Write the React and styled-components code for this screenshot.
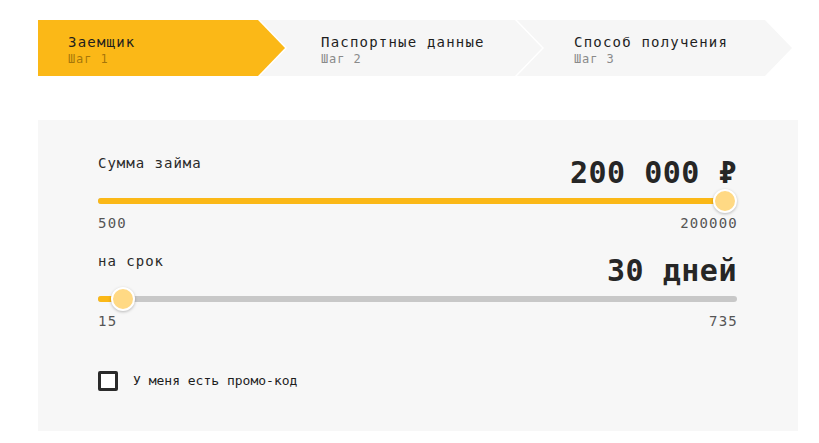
import React from "react";
import styled, { createGlobalStyle } from "styled-components";

const Global = createGlobalStyle`
  html, body { margin: 0; padding: 0; background: #fff; }
  body { font-family: "DejaVu Sans Mono", "Liberation Mono", monospace; color: #222; }
  * { box-sizing: border-box; }
`;

const Page = styled.div`
  width: 819px;
  padding: 20px 21px 0 38px;
`;

const Stepper = styled.div`
  display: flex;
  height: 56px;
`;

const ARROW = 27;

const Step = styled.div`
  flex: 0 0 ${(p) => p.$w}px;
  margin-left: ${(p) => (p.$first ? 0 : -25)}px;
  padding-left: ${(p) => p.$pl}px;
  padding-top: 3px;
  background: ${(p) => (p.$active ? "#FBB817" : "#f6f6f6")};
  display: flex;
  flex-direction: column;
  justify-content: center;
  gap: 1px;
  clip-path: ${(p) =>
    p.$first
      ? `polygon(0 0, calc(100% - ${ARROW}px) 0, 100% 50%, calc(100% - ${ARROW}px) 100%, 0 100%)`
      : `polygon(0 0, calc(100% - ${ARROW}px) 0, 100% 50%, calc(100% - ${ARROW}px) 100%, 0 100%, ${ARROW}px 50%)`};
`;

const StepTitle = styled.div`
  font-size: 14px;
  letter-spacing: 1.2px;
  line-height: 18px;
  color: #1e1e1e;
`;

const StepSub = styled.div`
  font-size: 12px;
  letter-spacing: 0.9px;
  line-height: 15px;
  color: ${(p) => (p.$active ? "rgba(90,60,0,0.55)" : "#8a8a8a")};
`;

const Panel = styled.div`
  margin-top: 44px;
  width: 760px;
  background: #f7f7f7;
  padding: 33px 61px 40px 60px;
  display: flex;
  flex-direction: column;
`;

const Block = styled.div`
  display: flex;
  flex-direction: column;
  margin-bottom: ${(p) => p.$mb}px;
`;

const HeadRow = styled.div`
  display: flex;
  justify-content: space-between;
  align-items: flex-start;
`;

const Label = styled.div`
  font-size: 14px;
  letter-spacing: 1px;
  line-height: 20px;
  color: #2a2a2a;
`;

const Value = styled.div`
  font-size: 30px;
  font-weight: bold;
  letter-spacing: 0.5px;
  line-height: 34px;
  margin-top: 3px;
  color: #262626;
`;

const Slider = styled.div`
  position: relative;
  height: 24px;
  margin-top: -1px;
`;

const Track = styled.div`
  position: absolute;
  left: 0;
  right: 0;
  top: 9px;
  height: 6px;
  border-radius: 3px;
  background: #c8c8c8;
`;

const Fill = styled.div`
  position: absolute;
  left: 0;
  top: 9px;
  height: 6px;
  border-radius: 3px;
  background: #FBB817;
`;

const Thumb = styled.div`
  position: absolute;
  top: 0;
  width: 24px;
  height: 24px;
  border-radius: 50%;
  background: #FFD984;
  border: 2px solid #fff;
  box-shadow: 0 1px 3px rgba(0, 0, 0, 0.25);
`;

const Range = styled.div`
  display: flex;
  justify-content: space-between;
  font-size: 14px;
  letter-spacing: 1.2px;
  line-height: 18px;
  margin-top: 1px;
  color: #555;
  margin-right: -1px;
`;

const CheckRow = styled.label`
  display: flex;
  align-items: center;
  gap: 15px;
  cursor: pointer;
`;

const Box = styled.span`
  width: 20px;
  height: 20px;
  border: 3px solid #2b2b2b;
  border-radius: 2px;
  background: #fff;
`;

const CheckText = styled.span`
  font-size: 13px;
  line-height: 20px;
  color: #1e1e1e;
`;

function RangeSlider({ label, display, min, max, value }) {
  const frac = (value - min) / (max - min);
  const width = 639;
  const left = frac * (width - 24);
  return (
    <>
      <HeadRow>
        <Label>{label}</Label>
        <Value>{display}</Value>
      </HeadRow>
      <Slider>
        <Track />
        <Fill style={{ width: left + 12 }} />
        <Thumb style={{ left }} />
      </Slider>
      <Range>
        <span>{min}</span>
        <span>{max}</span>
      </Range>
    </>
  );
}

const steps = [
  { title: "Заемщик", sub: "Шаг 1", w: 247, pl: 30, active: true },
  { title: "Паспортные данные", sub: "Шаг 2", w: 282, pl: 61 },
  { title: "Способ получения", sub: "Шаг 3", w: 275, pl: 57 },
];

export default function App() {
  return (
    <Page>
      <Global />
      <Stepper>
        {steps.map((s, i) => (
          <Step key={s.title} $w={s.w} $pl={s.pl} $first={i === 0} $active={s.active}>
            <StepTitle>{s.title}</StepTitle>
            <StepSub $active={s.active}>{s.sub}</StepSub>
          </Step>
        ))}
      </Stepper>
      <Panel>
        <Block $mb={19}>
          <RangeSlider label="Сумма займа" display="200 000 ₽" min={500} max={200000} value={200000} />
        </Block>
        <Block $mb={41}>
          <RangeSlider label="на срок" display="30 дней" min={15} max={735} value={30} />
        </Block>
        <CheckRow>
          <Box />
          <CheckText>У меня есть промо-код</CheckText>
        </CheckRow>
      </Panel>
    </Page>
  );
}
